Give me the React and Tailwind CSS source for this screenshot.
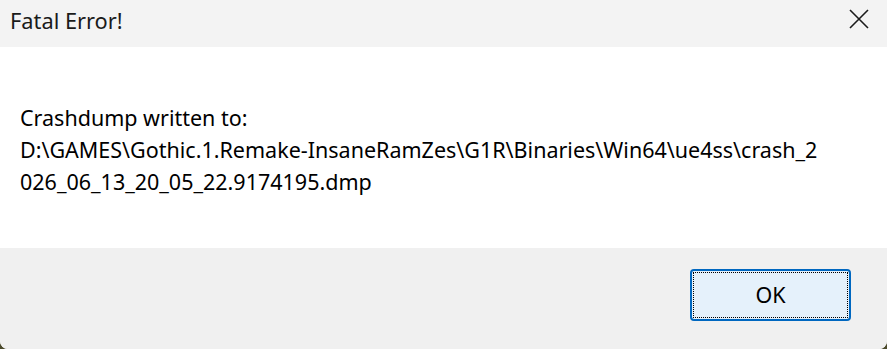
export default function App() {
  const font = { fontFamily: '"Noto Sans", "Open Sans", sans-serif' };
  return (
    <div className="w-[887px] h-[349px] bg-[#4b4a2c]" style={font}>
      <div className="w-full h-full flex flex-col rounded-b-[8px] overflow-hidden bg-white">
        <div className="h-[47px] bg-[#f3f3f3] flex items-center justify-between">
          <div className="pl-[10px] text-[21.8px] leading-none text-[#1a1a1a] pb-[6px]">Fatal Error!</div>
          <div className="w-[46px] h-[47px] flex items-center justify-center mr-[5px]">
            <svg width="20" height="20" viewBox="0 0 20 20" className="-mt-[10px]">
              <path d="M1 1 L19 19 M19 1 L1 19" stroke="#1a1a1a" strokeWidth="1.6" fill="none" />
            </svg>
          </div>
        </div>
        <div className="h-[201px] bg-white pl-[20px] pt-[55px] text-[21.5px] leading-[32px] text-black whitespace-nowrap">
          <div>Crashdump written to:</div>
          <div>D:\GAMES\Gothic.1.Remake-InsaneRamZes\G1R\Binaries\Win64\ue4ss\crash_2</div>
          <div>026_06_13_20_05_22.9174195.dmp</div>
        </div>
        <div className="flex-1 bg-[#f0f0f0] flex justify-end items-start pt-[21px] pr-[36px]">
          <button className="w-[161px] h-[52px] rounded-[4px] border-2 border-[#0067c0] bg-[#e5f1fb] p-[1px]">
            <div className="w-full h-full border border-dotted border-black flex items-center justify-center text-[21.5px] text-black">
              OK
            </div>
          </button>
        </div>
      </div>
    </div>
  );
}
